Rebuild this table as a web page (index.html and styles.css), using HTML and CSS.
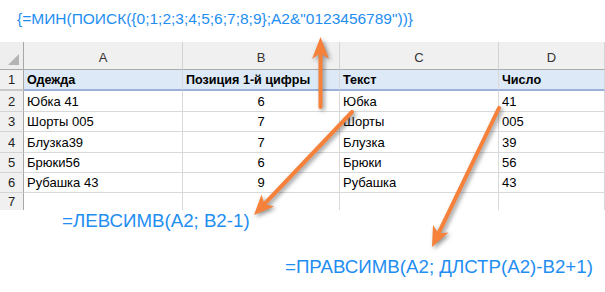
FILE: index.html
```html
<!DOCTYPE html>
<html lang="ru">
<head>
<meta charset="utf-8">
<title>Excel</title>
<link rel="stylesheet" href="styles.css">
</head>
<body>
<div class="page">
  <div class="formula formula-top">{=МИН(ПОИСК({0;1;2;3;4;5;6;7;8;9};A2&amp;"0123456789"))}</div>
  <div class="sheet">
    <div class="corner"><span class="tri"></span></div>
    <div class="colhead">A</div>
    <div class="colhead">B</div>
    <div class="colhead">C</div>
    <div class="colhead">D</div>

    <div class="rowhead r1">1</div>
    <div class="cell r1 b">Одежда</div>
    <div class="cell r1 b">Позиция 1-й цифры</div>
    <div class="cell r1 b">Текст</div>
    <div class="cell r1 b">Число</div>

    <div class="rowhead">2</div>
    <div class="cell">Юбка 41</div>
    <div class="cell c">6</div>
    <div class="cell">Юбка</div>
    <div class="cell">41</div>

    <div class="rowhead">3</div>
    <div class="cell">Шорты 005</div>
    <div class="cell c">7</div>
    <div class="cell">Шорты</div>
    <div class="cell">005</div>

    <div class="rowhead">4</div>
    <div class="cell">Блузка39</div>
    <div class="cell c">7</div>
    <div class="cell">Блузка</div>
    <div class="cell">39</div>

    <div class="rowhead">5</div>
    <div class="cell">Брюки56</div>
    <div class="cell c">6</div>
    <div class="cell">Брюки</div>
    <div class="cell">56</div>

    <div class="rowhead">6</div>
    <div class="cell">Рубашка 43</div>
    <div class="cell c">9</div>
    <div class="cell">Рубашка</div>
    <div class="cell">43</div>

    <div class="rowhead last">7</div>
    <div class="cell last"></div>
    <div class="cell last"></div>
    <div class="cell last"></div>
    <div class="cell last"></div>
  </div>
  <div class="formula formula-left">=ЛЕВСИМВ(A2; B2-1)</div>
  <div class="formula formula-right">=ПРАВСИМВ(A2; ДЛСТР(A2)-B2+1)</div>

  <svg class="arrows" width="605" height="292" viewBox="0 0 605 292">
    <g class="arrow">
      <line x1="320.5" y1="107" x2="320.5" y2="53" />
      <polygon points="320.5,37 312,59 320.5,53 329,59" />
    </g>
    <g class="arrow">
      <line x1="352" y1="112" x2="265" y2="203.4" />
      <polygon points="254,215 261.5,194.5 264.3,204.1 274,206.5" />
    </g>
    <g class="arrow">
      <line x1="499" y1="108" x2="438.9" y2="232.6" />
      <polygon points="432,247 433,225 438.5,233.5 448.5,232.5" />
    </g>
  </svg>
</div>
</body>
</html>
```

FILE: styles.css
```css
html, body {
  margin: 0;
  padding: 0;
  background: #ffffff;
}

.page {
  position: relative;
  width: 605px;
  height: 292px;
  overflow: hidden;
  font-family: "Liberation Sans", Arial, sans-serif;
}

.formula {
  color: #1f8ef1;
  font-family: "Liberation Sans", Arial, sans-serif;
  white-space: nowrap;
}

.formula-top {
  font-size: 15.5px;
  line-height: 20px;
  padding: 9px 0 0 17px;
  height: 33px;
  box-sizing: border-box;
  margin-bottom: 9px;
}

.formula-left {
  font-size: 18.7px;
  line-height: 22px;
  padding-left: 62px;
  margin-top: 0;
}

.formula-right {
  font-size: 18.7px;
  line-height: 22px;
  padding-left: 285px;
  margin-top: 24px;
}

.sheet {
  display: grid;
  grid-template-columns: 24px 159px 157px 159px 106px;
  grid-template-rows: 28px 21px 21px 20px 21px 20px 20px 17px;
  font-size: 13px;
  color: #000;
}

.corner {
  background: #eeeeee;
  border-right: 1px solid #a8a8a8;
  border-bottom: 1px solid #a8a8a8;
  position: relative;
}

.tri {
  position: absolute;
  right: 4px;
  bottom: 4px;
  width: 0;
  height: 0;
  border-left: 11px solid transparent;
  border-bottom: 11px solid #b4b4b4;
}

.colhead {
  background: #f0f0f0;
  border-right: 1px solid #d4d4d4;
  border-bottom: 1px solid #ababab;
  color: #333;
  display: flex;
  align-items: center;
  justify-content: center;
  padding-top: 4px;
}

.rowhead {
  background: #f0f0f0;
  border-right: 1px solid #a8a8a8;
  border-bottom: 1px solid #d4d4d4;
  color: #222;
  display: flex;
  align-items: center;
  justify-content: center;
}

.cell {
  border-right: 1px solid #d9d9d9;
  border-bottom: 1px solid #d9d9d9;
  display: flex;
  align-items: center;
  padding-left: 3px;
  white-space: nowrap;
  overflow: hidden;
}

.cell.c {
  justify-content: center;
  padding-left: 0;
}

.cell.b {
  font-weight: bold;
  font-size: 12.6px;
}

.r1.cell {
  background: #dde9f6;
  border-bottom: 2px solid #9bb0da;
}

.rowhead.r1 {
  border-bottom: 2px solid #c8c8c8;
}

.last {
  border-bottom: none;
}

.arrows {
  position: absolute;
  left: 0;
  top: 0;
  pointer-events: none;
}

.arrow {
  filter: drop-shadow(2px 2px 2px rgba(60, 60, 60, 0.55));
}

.arrow line {
  stroke: #f5813b;
  stroke-width: 4;
  stroke-linecap: round;
}

.arrow polygon {
  fill: #f5813b;
}
```
